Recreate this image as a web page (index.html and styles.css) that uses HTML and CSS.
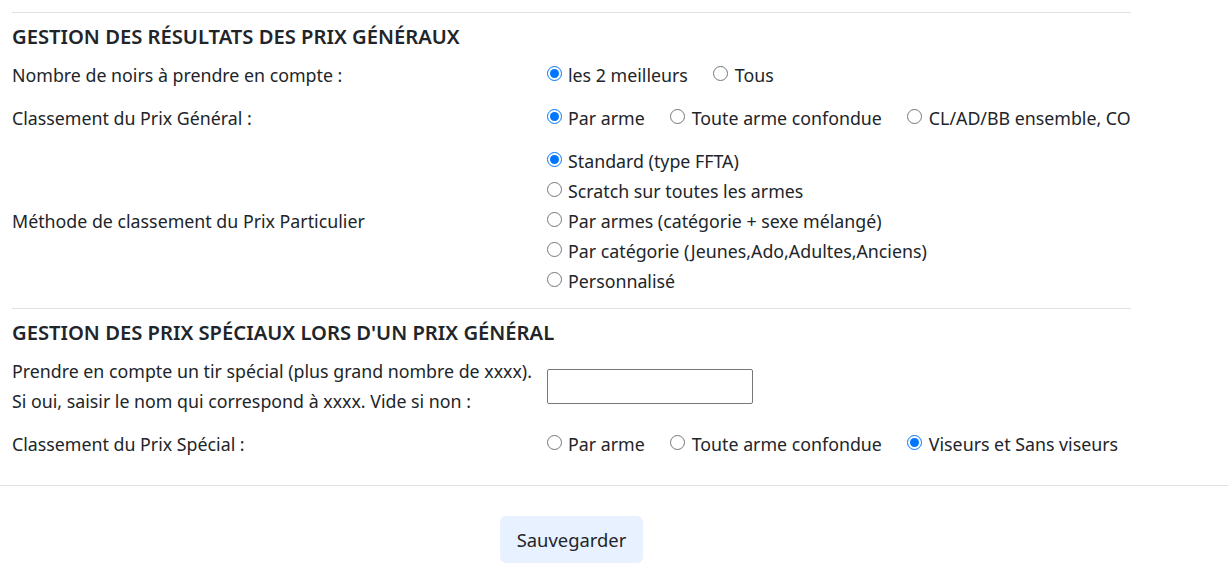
FILE: index.html
```html
<!DOCTYPE html>
<html lang="fr">
<head>
<meta charset="utf-8">
<title>Gestion des prix</title>
<link rel="stylesheet" href="styles.css">
</head>
<body>
<div class="page">
  <section class="group">
    <h2 class="group-title">GESTION DES RÉSULTATS DES PRIX GÉNÉRAUX</h2>
    <div class="row">
      <div class="label">Nombre de noirs à prendre en compte :</div>
      <div class="opts">
        <label class="opt"><input type="radio" name="noirs" checked><span>les 2 meilleurs</span></label>
        <label class="opt"><input type="radio" name="noirs"><span>Tous</span></label>
      </div>
    </div>
    <div class="row">
      <div class="label">Classement du Prix Général :</div>
      <div class="opts">
        <label class="opt"><input type="radio" name="pg" checked><span>Par arme</span></label>
        <label class="opt"><input type="radio" name="pg"><span>Toute arme confondue</span></label>
        <label class="opt"><input type="radio" name="pg"><span>CL/AD/BB ensemble, CO</span></label>
      </div>
    </div>
    <div class="row">
      <div class="label">Méthode de classement du Prix Particulier</div>
      <div class="opts stack">
        <label class="opt"><input type="radio" name="pp" checked><span>Standard (type FFTA)</span></label>
        <label class="opt"><input type="radio" name="pp"><span>Scratch sur toutes les armes</span></label>
        <label class="opt"><input type="radio" name="pp"><span>Par armes (catégorie + sexe mélangé)</span></label>
        <label class="opt"><input type="radio" name="pp"><span>Par catégorie (Jeunes,Ado,Adultes,Anciens)</span></label>
        <label class="opt"><input type="radio" name="pp"><span>Personnalisé</span></label>
      </div>
    </div>
  </section>
  <section class="group last">
    <h2 class="group-title">GESTION DES PRIX SPÉCIAUX LORS D'UN PRIX GÉNÉRAL</h2>
    <div class="row">
      <div class="label">Prendre en compte un tir spécial (plus grand nombre de xxxx).<br>Si oui, saisir le nom qui correspond à xxxx. Vide si non :</div>
      <div class="opts">
        <input type="text" class="field">
      </div>
    </div>
    <div class="row">
      <div class="label">Classement du Prix Spécial :</div>
      <div class="opts">
        <label class="opt"><input type="radio" name="ps"><span>Par arme</span></label>
        <label class="opt"><input type="radio" name="ps"><span>Toute arme confondue</span></label>
        <label class="opt"><input type="radio" name="ps" checked><span>Viseurs et Sans viseurs</span></label>
      </div>
    </div>
  </section>
</div>
<div class="actions">
  <div class="actions-inner">
    <button type="button" class="btn-save">Sauvegarder</button>
  </div>
</div>
</body>
</html>
```
FILE: styles.css
```css
html, body {
  margin: 0;
  padding: 0;
  background: #ffffff;
}

body {
  font-family: "Noto Sans", "Open Sans", sans-serif;
  font-size: 17.8px;
  line-height: 30px;
  color: #212529;
}

.page {
  width: 1119px;
  margin-left: 12px;
  padding-top: 12px;
}

.group {
  border-top: 1px solid #dee2e6;
  padding-bottom: 6px;
}

.group.last {
  padding-bottom: 19.6px;
}

.group-title {
  margin: 8px 0 3px 0;
  font-size: 20.2px;
  line-height: 30px;
  font-weight: 600;
  color: #212529;
}

.row {
  display: grid;
  grid-template-columns: 534px 1fr;
  align-items: center;
  padding: 6.35px 0;
}

.label {
  white-space: nowrap;
}

.opts {
  display: flex;
  align-items: center;
  gap: 25px;
  white-space: nowrap;
}

.opts.stack {
  flex-direction: column;
  align-items: flex-start;
  gap: 0;
}

.opt {
  display: flex;
  align-items: center;
  height: 30px;
}

.opt input[type="radio"] {
  width: 15px;
  height: 15px;
  margin: 0 6.5px 3px 0.5px;
}

.field {
  box-sizing: border-box;
  width: 206px;
  height: 35px;
  margin: 0 0 0 0.7px;
  border: 1px solid #767676;
  border-radius: 2px;
  font-family: inherit;
  font-size: 17.8px;
}

.actions {
  border-top: 1px solid #dee2e6;
  padding-top: 30px;
}

.actions-inner {
  width: 1119px;
  margin-left: 12px;
  display: flex;
  justify-content: center;
}

.btn-save {
  width: 143px;
  height: 47px;
  border: none;
  border-radius: 6px;
  background: #e7f1ff;
  color: #212529;
  font-family: "Noto Sans", "Open Sans", sans-serif;
  font-size: 18.4px;
  line-height: 30px;
  padding: 0;
}
```
